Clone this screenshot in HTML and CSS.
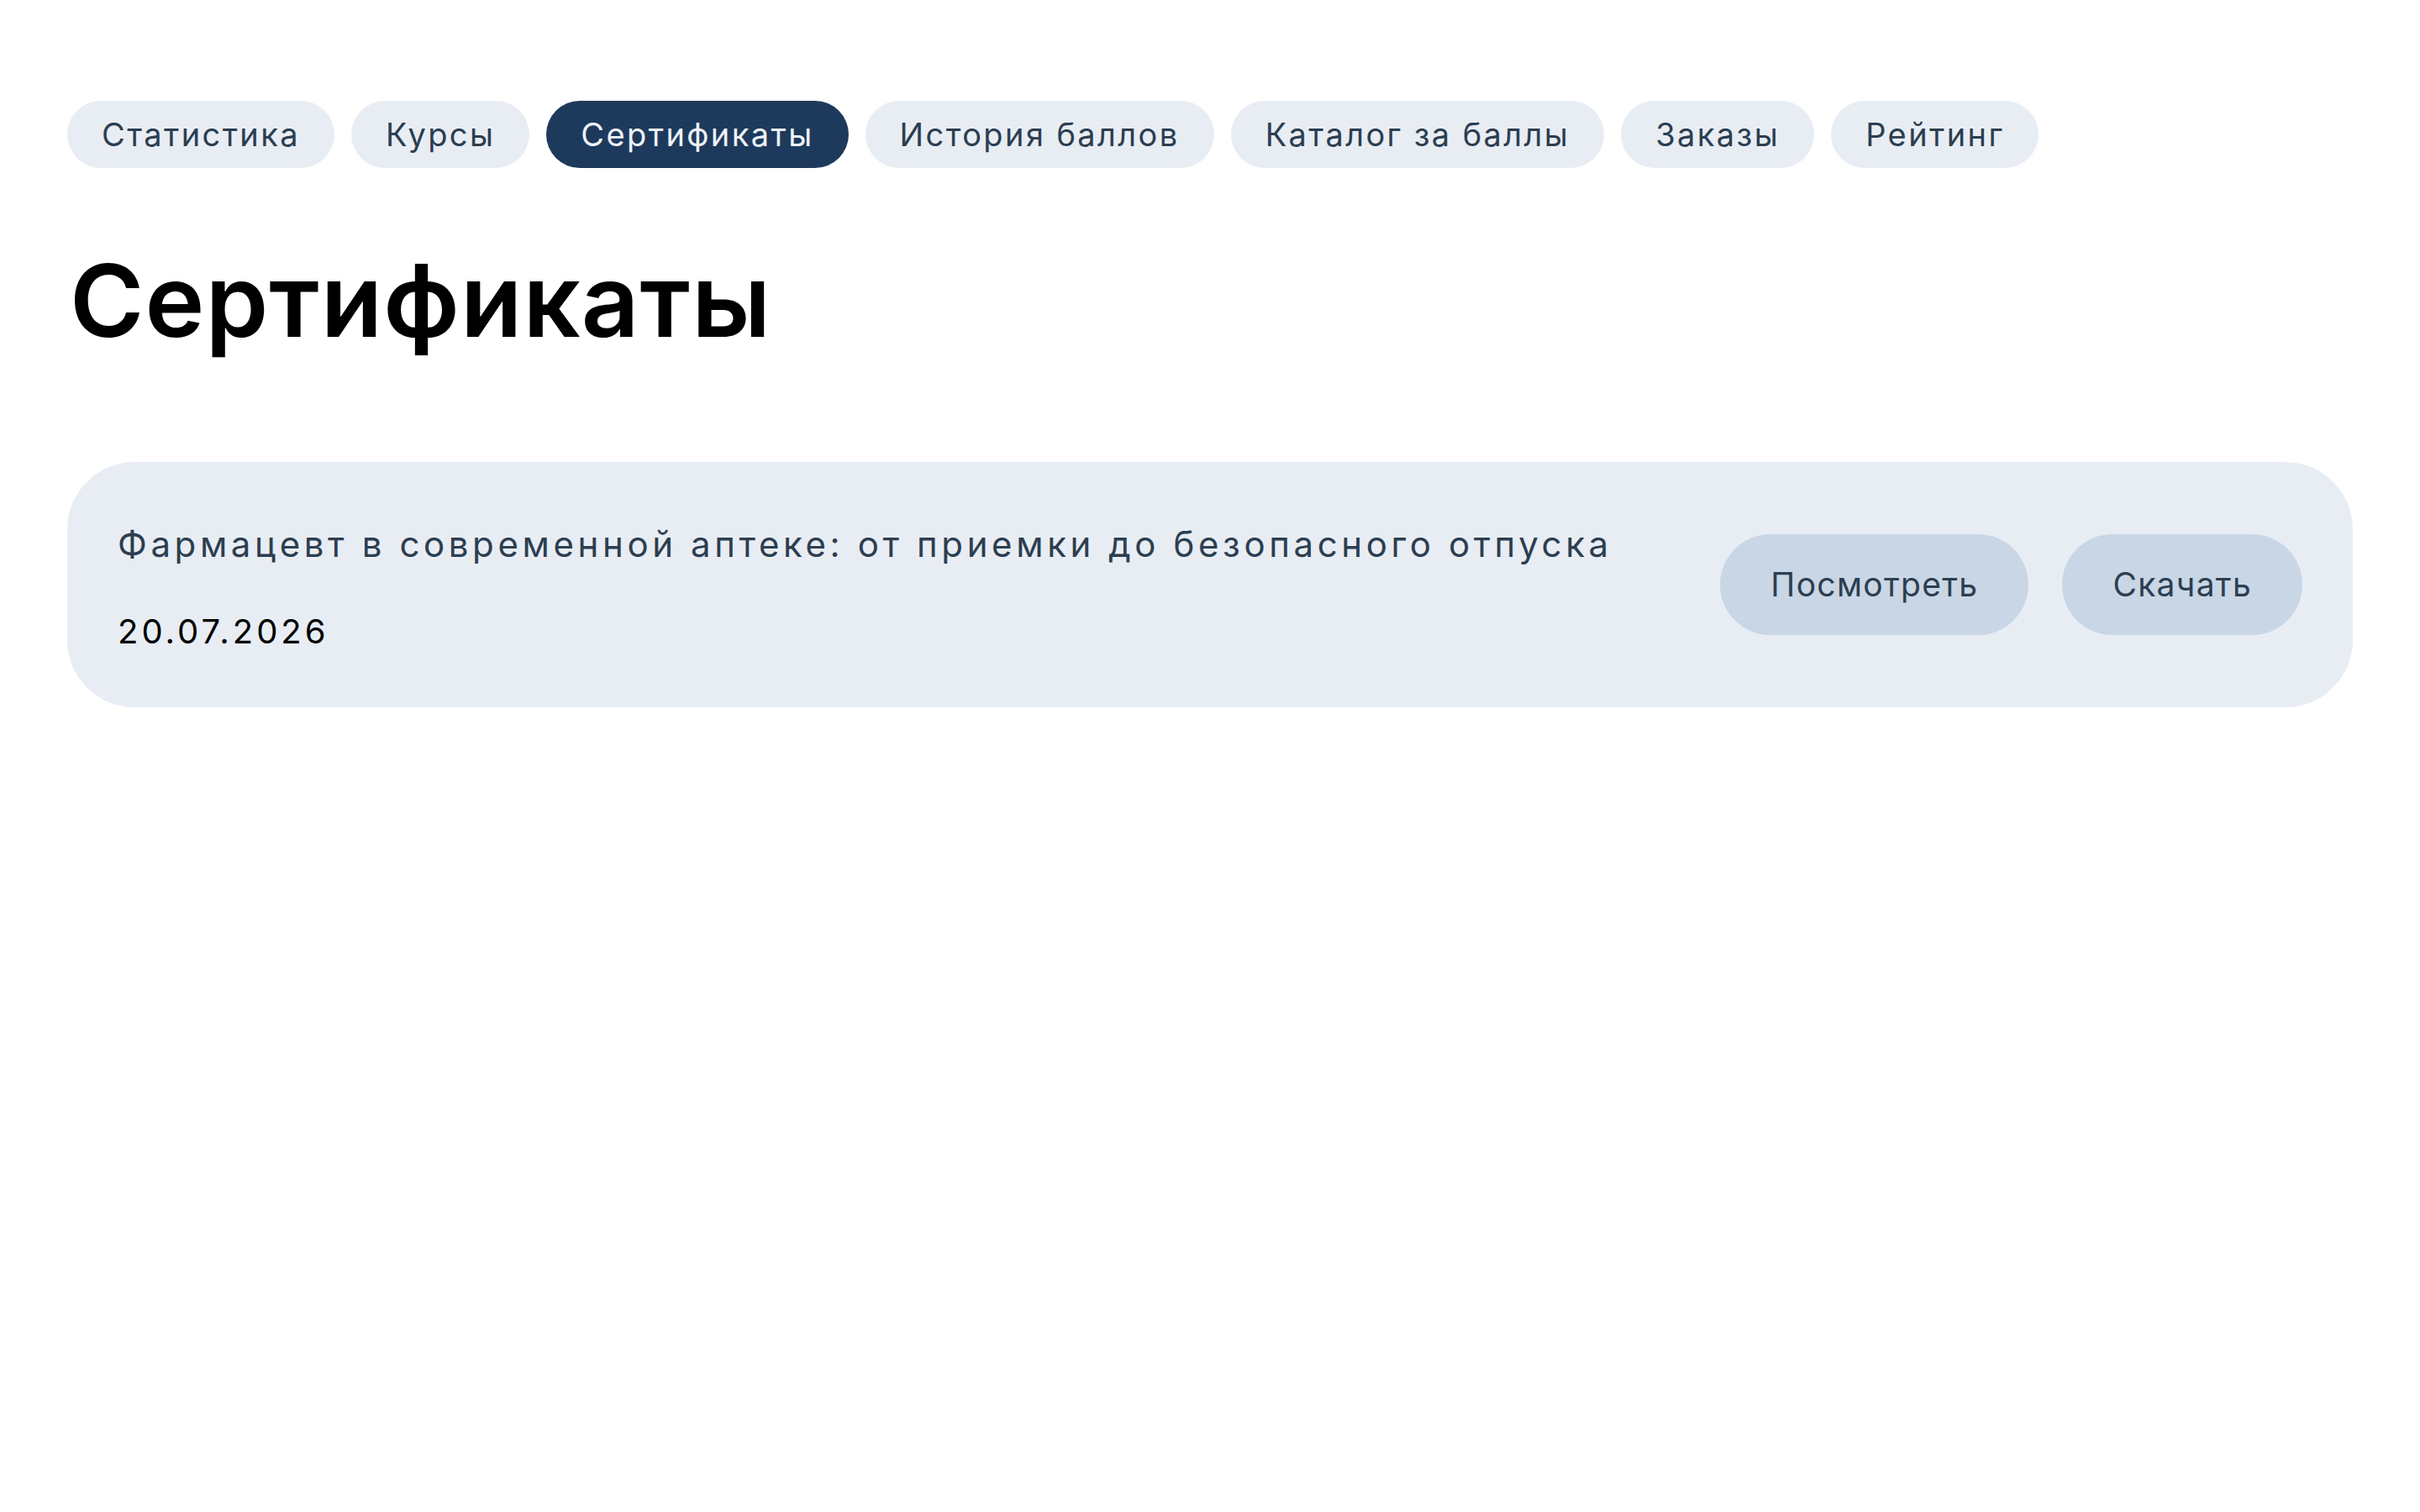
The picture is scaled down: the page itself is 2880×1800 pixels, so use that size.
FILE: index.html
```html
<!DOCTYPE html>
<html lang="ru">
<head>
<meta charset="utf-8">
<title>Сертификаты</title>
<link rel="stylesheet" href="styles.css">
</head>
<body>
<div class="page">
  <nav class="tabs">
    <a class="tab">Статистика</a>
    <a class="tab">Курсы</a>
    <a class="tab tab-active">Сертификаты</a>
    <a class="tab">История баллов</a>
    <a class="tab">Каталог за баллы</a>
    <a class="tab">Заказы</a>
    <a class="tab">Рейтинг</a>
  </nav>
  <h1 class="title">Сертификаты</h1>
  <div class="cert">
    <div class="cert-info">
      <div class="cert-name">Фармацевт в современной аптеке: от приемки до безопасного отпуска</div>
      <div class="cert-date">20.07.2026</div>
    </div>
    <div class="cert-actions">
      <button class="btn">Посмотреть</button>
      <button class="btn">Скачать</button>
    </div>
  </div>
</div>
</body>
</html>
```
FILE: styles.css
```css
html, body {
  margin: 0;
  padding: 0;
  background: #ffffff;
}
body {
  font-family: Inter, "Noto Sans", "DejaVu Sans", sans-serif;
  color: #2c3e50;
}
.page {
  padding: 120px 80px;
}
.tabs {
  display: flex;
  flex-wrap: wrap;
  gap: 20px;
}
.tab {
  display: block;
  height: 80px;
  line-height: 80px;
  padding: 0 41px;
  border-radius: 40px;
  background: #e8edf4;
  color: #2c3e50;
  font-size: 38px;
  letter-spacing: 2.4px;
  white-space: nowrap;
}
.tab-active {
  background: #1d3a5c;
  color: #eef2f7;
}
.title {
  margin: 86px 0 120px;
  font-size: 120px;
  line-height: 144px;
  font-weight: 600;
  color: #000000;
  letter-spacing: 1px;
  padding-left: 3px;
}
.cert {
  display: flex;
  align-items: center;
  justify-content: space-between;
  gap: 40px;
  background: #e8edf4;
  border-radius: 80px;
  padding: 60px 60px;
}
.cert-name {
  font-size: 42px;
  line-height: 76px;
  letter-spacing: 4.6px;
  color: #2c3e50;
}
.cert-date {
  margin-top: 36px;
  font-size: 40px;
  line-height: 60px;
  letter-spacing: 4px;
  color: #000000;
}
.cert-actions {
  display: flex;
  gap: 40px;
  flex-shrink: 0;
}
.btn {
  border: none;
  background: #c9d6e5;
  color: #2c3e50;
  font-family: inherit;
  font-size: 39px;
  line-height: 48px;
  padding: 36px 60px;
  border-radius: 60px;
  letter-spacing: 1.3px;
}
```
